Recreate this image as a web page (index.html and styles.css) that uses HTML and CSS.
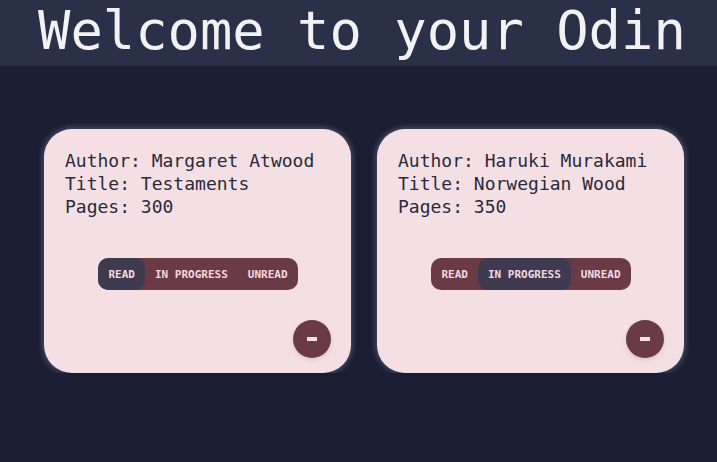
FILE: index.html
```html
<!DOCTYPE html>
<html lang="en">
<head>
<meta charset="utf-8">
<title>Odin Library</title>
<link rel="stylesheet" href="styles.css">
</head>
<body>
<header class="header"><h1 class="title">Welcome to your Odin</h1></header>
<main class="cards">
  <article class="card">
    <div class="info">
      <p>Author: Margaret Atwood</p>
      <p>Title: Testaments</p>
      <p>Pages: 300</p>
    </div>
    <div class="toggle">
      <span class="seg active">READ</span>
      <span class="seg">IN PROGRESS</span>
      <span class="seg">UNREAD</span>
    </div>
    <button class="del" aria-label="Remove"><span class="minus"></span></button>
  </article>
  <article class="card">
    <div class="info">
      <p>Author: Haruki Murakami</p>
      <p>Title: Norwegian Wood</p>
      <p>Pages: 350</p>
    </div>
    <div class="toggle">
      <span class="seg">READ</span>
      <span class="seg active">IN PROGRESS</span>
      <span class="seg">UNREAD</span>
    </div>
    <button class="del" aria-label="Remove"><span class="minus"></span></button>
  </article>
</main>
</body>
</html>
```
FILE: styles.css
```css
html, body {
  margin: 0;
  padding: 0;
  background: #1c1f33;
  font-family: "DejaVu Sans Mono", "Liberation Mono", monospace;
  overflow: hidden;
}
.header {
  height: 66px;
  background: #2a3047;
}
.title {
  margin: 0;
  padding-left: 38px;
  font-size: 53.8px;
  font-weight: normal;
  line-height: 62px;
  color: #f2f2f4;
  white-space: nowrap;
}
.cards {
  display: flex;
  gap: 26px;
  padding: 63px 0 0 44px;
}
.card {
  box-sizing: border-box;
  width: 307px;
  height: 244px;
  border-radius: 28px;
  background: #f4e0e4;
  box-shadow: 0 0 5px 2px rgba(190, 195, 230, 0.25);
  padding: 20px 20px 15px 21px;
  display: flex;
  flex-direction: column;
}
.info p {
  margin: 0;
  font-size: 18px;
  line-height: 23px;
  color: #2b2a3a;
}
.toggle {
  align-self: center;
  display: flex;
  height: 32px;
  margin-top: 40px;
  border-radius: 10px;
  background: #6a3a46;
  overflow: hidden;
}
.seg {
  display: flex;
  align-items: center;
  padding: 0 10px;
  font-size: 11px;
  font-weight: bold;
  color: #f3d9e0;
  border-radius: 10px;
}
.seg.active {
  background: #3f3a50;
}
.del {
  align-self: flex-end;
  margin-top: auto;
  width: 38px;
  height: 38px;
  border: none;
  border-radius: 50%;
  background: #6a3a46;
  padding: 0;
  display: flex;
  align-items: center;
  justify-content: center;
  box-shadow: 0 2px 4px rgba(80, 40, 50, 0.15);
}
.minus {
  width: 10px;
  height: 4px;
  background: #f6e4e8;
}
```
